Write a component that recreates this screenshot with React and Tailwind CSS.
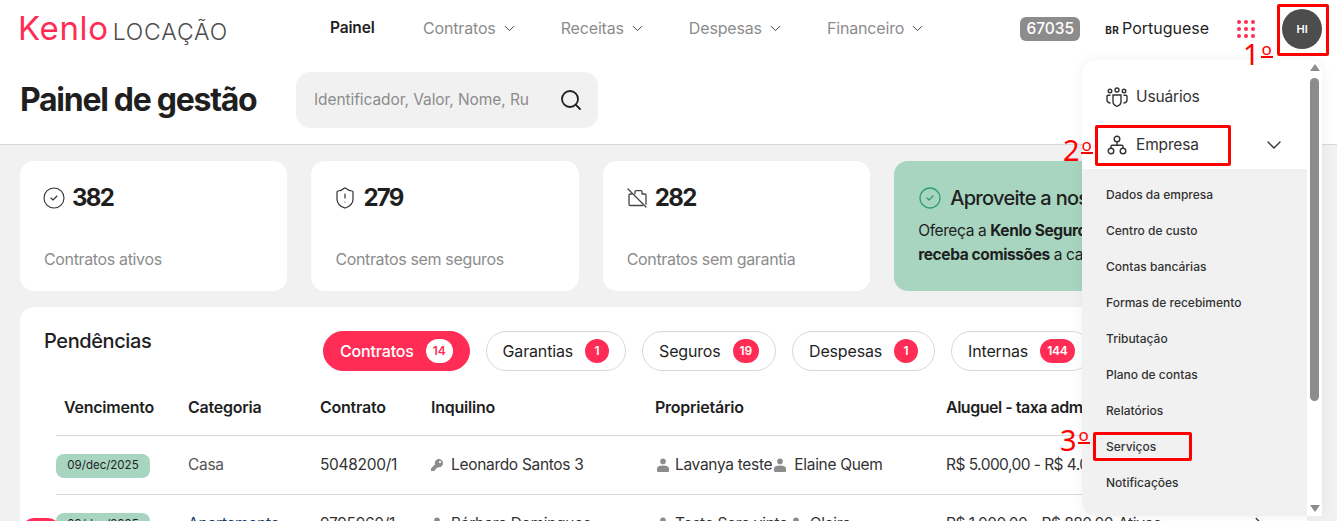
import React from "react";
import { ChevronDown, ChevronRight, Search, CircleCheck, ShieldAlert } from "lucide-react";
import { FaKey } from "react-icons/fa";

const F = { fontFamily: "Inter, 'Liberation Sans', sans-serif" };

function NavItem({ label }) {
  return (
    <div className="flex items-center gap-[5px] text-[16px] text-[#8c8c8c] tracking-[-0.01em]">
      <span>{label}</span>
      <ChevronDown size={17} strokeWidth={1.4} className="text-[#444]" />
    </div>
  );
}

function BagOff() {
  return (
    <svg width="20" height="20" viewBox="0 0 20 20" fill="none" stroke="#444" strokeWidth="1.3" strokeLinecap="round" strokeLinejoin="round">
      <path d="M5 6H3.2A1.2 1.2 0 0 0 2 7.2v9.1a1.2 1.2 0 0 0 1.2 1.2h12.6" />
      <path d="M8 5.8V3.6A1 1 0 0 1 9 2.6h5a1 1 0 0 1 1 1V6h2.8A1.2 1.2 0 0 1 19 7.2v9" />
      <path d="M1 1l18 18" />
    </svg>
  );
}

function StatCard({ icon, value, label }) {
  return (
    <div className="w-[267.4px] h-[130px] shrink-0 bg-white rounded-[14px] pl-[24px] pt-[20px]">
      <div className="flex items-center gap-[8px] h-[34px]">
        {icon}
        <span className="text-[24px] font-bold text-[#1f1f1f] tracking-[-0.07em]">{value}</span>
      </div>
      <div className="mt-[32px] text-[16px] text-[#8c8c8c] tracking-[-0.022em]">{label}</div>
    </div>
  );
}

function Tab({ label, count, active }) {
  return (
    <div
      className={
        "h-[40px] shrink-0 rounded-full flex items-center px-[16px] gap-[12px] text-[16px] tracking-[-0.01em] border " +
        (active ? "bg-[#ff2d55] border-[#ff2d55] text-white font-medium" : "bg-white border-[#d9d9d9] text-[#1f1f1f]")
      }
    >
      <span>{label}</span>
      <span
        className={
          "h-[24px] min-w-[24px] px-[7px] rounded-full flex items-center justify-center text-[12px] font-semibold " +
          (active ? "bg-white text-[#ff2d55]" : "bg-[#ff2d55] text-white")
        }
      >
        {count}
      </span>
    </div>
  );
}

function Person() {
  return (
    <svg width="12" height="14" viewBox="0 0 12 14" fill="#8c8c8c" className="shrink-0">
      <circle cx="6" cy="3.4" r="2.8" />
      <path d="M1 14a1 1 0 0 1-1-1V10.6C0 8.6 2.2 7.4 6 7.4s6 1.2 6 3.2V13a1 1 0 0 1-1 1z" />
    </svg>
  );
}

const cols = "grid grid-cols-[132px_132px_111px_224px_291px_1fr] items-center";

function Row({ date, cat, catClass, contract, keyIcon, tenant, o1, o2, value, extra }) {
  return (
    <div className={cols + " h-[59px] border-b border-[#d9d9d9] text-[15.5px] text-[#333] tracking-[-0.02em] whitespace-nowrap"}>
      <div>
        <span className="inline-flex items-center justify-center w-[94px] h-[24px] rounded-[8px] bg-[#a8d5c0] text-[11.5px] text-[#1f1f1f] tracking-normal">{date}</span>
      </div>
      <div className={catClass}>{cat}</div>
      <div>{contract}</div>
      <div className="flex items-center gap-[8px]">
        {keyIcon ? <FaKey size={12} className="text-[#8c8c8c]" /> : <Person />}
        <span>{tenant}</span>
      </div>
      <div className="flex items-center">
        <span className="ml-[2px]"><Person /></span>
        <span className="ml-[6px]">{o1}</span>
        <span className="ml-[2px]"><Person /></span>
        <span className="ml-[8px]">{o2}</span>
      </div>
      <div className="flex items-center pr-[37px]">
        <span className="w-[172px] tracking-[-0.035em]">{value}</span>
        <span>{extra}</span>
        <ChevronRight size={22} strokeWidth={1.4} className="ml-auto text-[#333]" />
      </div>
    </div>
  );
}

const subItems = ["Dados da empresa", "Centro de custo", "Contas bancárias", "Formas de recebimento", "Tributação", "Plano de contas", "Relatórios", "Serviços", "Notificações"];

function UsersIcon() {
  return (
    <svg width="22" height="22" viewBox="0 0 22 22" fill="none" stroke="#333" strokeWidth="1.4">
      <circle cx="11" cy="4" r="2" />
      <circle cx="4" cy="5" r="1.8" />
      <circle cx="18" cy="5" r="1.8" />
      <path d="M7 9h8v7c0 2.4-2 3.6-4 4.4-2-.8-4-2-4-4.4z" />
      <path d="M4 9.2H2.2C1.6 9.2 1 9.7 1 10.4V14c0 1.7 1.3 2.7 3 3" strokeLinecap="round" />
      <path d="M18 9.2h1.8c.6 0 1.2.5 1.2 1.2V14c0 1.7-1.3 2.7-3 3" strokeLinecap="round" />
    </svg>
  );
}

function OrgIcon() {
  return (
    <svg width="20" height="20" viewBox="0 0 20 20" fill="none" stroke="#333" strokeWidth="1.4">
      <circle cx="10" cy="4" r="2.8" />
      <circle cx="4" cy="16" r="2.8" />
      <circle cx="16" cy="16" r="2.8" />
      <path d="M10 7v3M4 13.2V11.4a1.2 1.2 0 0 1 1.2-1.2h9.6a1.2 1.2 0 0 1 1.2 1.2v1.8" />
    </svg>
  );
}

function Mark({ n, className }) {
  return (
    <div className={"absolute flex items-start text-[#ff0000] text-[29px] leading-none whitespace-nowrap " + className} style={{ fontFamily: "'Noto Sans', sans-serif" }}>
      <span>{n}</span>
      <span className="ml-[1px] mt-[2px] text-[17px] leading-[15px] h-[17px] w-[12px] text-center border-b-2 border-[#ff0000]">o</span>
    </div>
  );
}

export default function App() {
  return (
    <div className="relative w-[1337px] h-[521px] overflow-hidden bg-[#f1f1f1]" style={F}>
      {/* Header */}
      <header className="h-[145px] bg-white border-b border-[#d9d9d9]">
        <div className="h-[58px] flex items-center pl-[20px]">
          <div className="w-[310px] flex items-baseline shrink-0 whitespace-nowrap -mt-[2px]">
            <span className="text-[#ff2d55] text-[33px] font-normal tracking-[0.02em] leading-none -ml-[2px]">Kenlo</span>
            <span className="ml-[4px] text-[#4d4d4d] text-[23px] font-light tracking-[0.035em] leading-none">LOCAÇÃO</span>
          </div>
          <div className="flex items-center -mt-[2px] text-[15.5px] font-semibold text-[#1f1f1f] tracking-[-0.01em] w-[93px]">Painel</div>
          <div className="flex items-center -mt-[2px] gap-[43px]">
            <NavItem label="Contratos" />
            <NavItem label="Receitas" />
            <NavItem label="Despesas" />
            <NavItem label="Financeiro" />
          </div>
          <div className="ml-[94px] w-[60px] h-[24px] rounded-[6px] bg-[#8c8c8c] text-white text-[15.5px] font-medium flex items-center justify-center">67035</div>
          <div className="ml-[25px] -mt-[2px] flex items-baseline gap-[3px] text-[#1f1f1f]">
            <span className="text-[10px] font-bold tracking-[0.03em]">BR</span>
            <span className="text-[16px]">Portuguese</span>
          </div>
          <div className="ml-[28px] grid grid-cols-3 gap-[3px] w-[18px]">
            {Array.from({ length: 9 }).map((_, i) => (
              <span key={i} className="w-[4px] h-[4px] rounded-full bg-[#ff2d55]" />
            ))}
          </div>
          <div className="ml-[27px] w-[40px] h-[40px] rounded-full bg-[#4d4d4d] text-white text-[11px] font-semibold flex items-center justify-center">HI</div>
        </div>
        <div className="flex items-center pl-[20px] pt-[14px]">
          <h1 className="w-[276px] shrink-0 text-[32px] font-bold text-[#1f1f1f] tracking-[-0.04em] whitespace-nowrap">Painel de gestão</h1>
          <div className="w-[302px] h-[56px] rounded-[14px] bg-[#f1f1f1] flex items-center pl-[18px] pr-[15px]">
            <div className="w-[215px] overflow-hidden whitespace-nowrap text-[15.5px] text-[#8c8c8c] tracking-[-0.005em]">Identificador, Valor, Nome, Rua</div>
            <Search size={24} strokeWidth={1.8} className="ml-auto text-[#1f1f1f]" />
          </div>
        </div>
      </header>

      {/* Cards */}
      <div className="flex gap-[24px] pl-[20px] pt-[16px]">
        <StatCard icon={<CircleCheck size={24} strokeWidth={1.1} className="text-[#333] -m-[2px]" />} value="382" label="Contratos ativos" />
        <StatCard icon={<ShieldAlert size={24} strokeWidth={1.2} className="text-[#333] -m-[2px]" />} value="279" label="Contratos sem seguros" />
        <StatCard icon={<BagOff />} value="282" label="Contratos sem garantia" />
        <div className="w-[420px] h-[130px] shrink-0 rounded-[14px] bg-[#a8d5c0] pl-[24px] pt-[22px] whitespace-nowrap text-[#1f1f1f]">
          <div className="flex items-center gap-[8px] h-[30px]">
            <CircleCheck size={24} strokeWidth={1.3} className="text-[#2e9e6e]" />
            <span className="text-[20px] font-medium tracking-[-0.035em]">Aproveite a nossa</span>
          </div>
          <div className="mt-[6px] text-[15.5px] leading-[24px] tracking-[-0.025em]">
            <div>Ofereça a <b className="font-bold">Kenlo Seguros</b></div>
            <div><b className="font-bold">receba comissões</b> a cada</div>
          </div>
        </div>
      </div>

      {/* Pendências */}
      <section className="mt-[16px] ml-[20px] w-[1287px] bg-white rounded-[14px] pl-[36px] pt-[24px] pb-[20px]">
        <div className="flex items-start h-[40px]">
          <h2 className="-ml-[12px] w-[279px] shrink-0 text-[20px] font-medium text-[#1f1f1f] tracking-[-0.02em] leading-[20px]">Pendências</h2>
          <div className="flex gap-[16px]">
            <Tab label="Contratos" count="14" active />
            <Tab label="Garantias" count="1" />
            <Tab label="Seguros" count="19" />
            <Tab label="Despesas" count="1" />
            <Tab label="Internas" count="144" />
          </div>
        </div>
        <div className={cols + " mt-[15px] h-[50px] pb-[7px] border-b border-[#d9d9d9] text-[16px] font-semibold text-[#1f1f1f] tracking-[-0.015em] whitespace-nowrap"}>
          <div className="pl-[8px]">Vencimento</div>
          <div>Categoria</div>
          <div>Contrato</div>
          <div>Inquilino</div>
          <div>Proprietário</div>
          <div className="tracking-[-0.03em]">Aluguel - taxa adm</div>
        </div>
        <Row date="09/dec/2025" cat="Casa" catClass="text-[#555]" contract="5048200/1" keyIcon tenant="Leonardo Santos 3" o1="Lavanya teste" o2="Elaine Quem" value="R$ 5.000,00 - R$ 4.000,00" />
        <Row date="09/dec/2025" cat="Apartamento" catClass="text-[#1f3a66]" contract="9795960/1" tenant="Bárbara Domingues" o1="Teste Sera vinte" o2="Olaira" value="R$ 1.000,00 - R$ 880,00" extra="Ativos" />
      </section>

      {/* Toast pill clipped at the bottom edge */}
      <div className="absolute left-[22px] top-[518px] w-[38px] h-[12px] rounded-t-full bg-[#ff2d55]" />

      {/* Dropdown */}
      <div className="absolute left-[1082px] top-[60px] w-[240px] h-[456px] bg-white rounded-tl-[14px] rounded-tr-[14px] rounded-bl-[14px] shadow-[0_0_14px_rgba(0,0,0,0.06)] overflow-hidden flex">
        <div className="w-[225px] shrink-0 flex flex-col">
          <div className="h-[109px] shrink-0 pl-[24px] pt-[14px]">
            <div className="flex items-center gap-[8px] h-[46px] text-[15.5px] text-[#333] tracking-[-0.01em]">
              <UsersIcon />
              <span>Usuários</span>
            </div>
            <div className="flex items-center gap-[9px] h-[50px] text-[15.5px] text-[#333] tracking-[-0.01em] pr-[21px]">
              <span className="ml-[1px]"><OrgIcon /></span>
              <span>Empresa</span>
              <ChevronDown size={24} strokeWidth={1.4} className="ml-auto" />
            </div>
          </div>
          <div className="flex-1 bg-[#f1f1f1] pl-[24px] pt-[8px] rounded-bl-[14px]">
            {subItems.map((s) => (
              <div key={s} className="h-[36px] flex items-center text-[12px] font-medium text-[#333] whitespace-nowrap">{s}</div>
            ))}
          </div>
        </div>
        <div className="flex-1 flex flex-col items-center pt-[4px]">
          <div className="w-0 h-0 border-x-[5px] border-x-transparent border-b-[7px] border-b-[#8c8c8c]" />
          <div className="mt-[7px] w-[9px] h-[323px] rounded-full bg-[#8c8c8c]" />
          <div className="mt-auto mb-[4px] w-0 h-0 border-x-[5px] border-x-transparent border-t-[7px] border-t-[#8c8c8c]" />
        </div>
      </div>

      {/* Annotations */}
      <div className="absolute left-[1277px] top-[4px] w-[52px] h-[52px] border-[3px] border-[#ff0000] rounded-[2px]" />
      <div className="absolute left-[1095px] top-[125px] w-[136px] h-[41px] border-[3px] border-[#ff0000] rounded-[2px]" />
      <div className="absolute left-[1093px] top-[432px] w-[99px] h-[29px] border-[3px] border-[#ff0000] rounded-[2px]" />
      <Mark n="1" className="left-[1243px] top-[39px]" />
      <Mark n="2" className="left-[1063px] top-[135px]" />
      <Mark n="3" className="left-[1060px] top-[425px]" />
    </div>
  );
}
